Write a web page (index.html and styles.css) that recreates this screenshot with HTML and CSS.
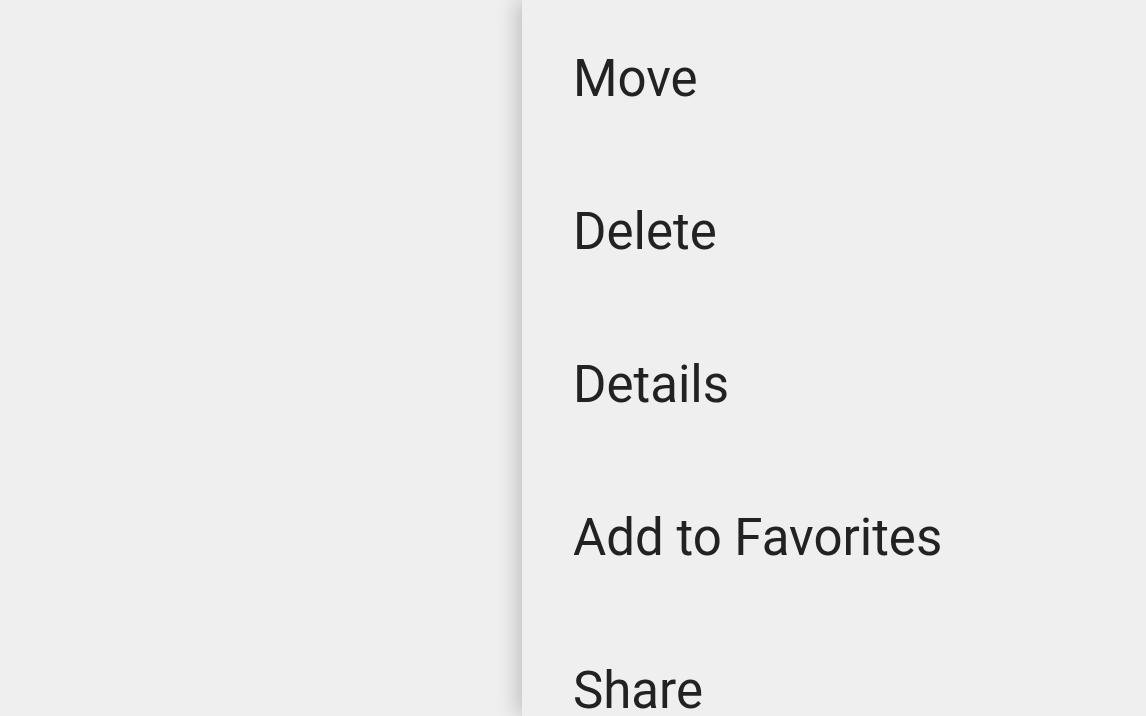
FILE: index.html
```html
<!doctype html>
<html>
 <head>
	<meta charset="UTF-8">
	<meta name="viewport" content="width=device-width, initial-scale=1.0">
	<title>Menu</title>
	<link rel="stylesheet" href="styles.css">
 </head>
<body>
	<div class="screen">
		<div class="backdrop"></div>
		<ul class="menu">
			<li>Move</li>
			<li>Delete</li>
			<li>Details</li>
			<li>Add to Favorites</li>
			<li>Share</li>
		</ul>
	</div>
</body>
</html>
```

FILE: styles.css
```css
* {
	box-sizing: border-box;
}

body {
	margin: 0;
	padding: 0;
	background-color: #efefef;
	font-family: "Roboto", "Liberation Sans", sans-serif;
	overflow: hidden;
}

.screen {
	display: flex;
	height: 716px;
	overflow: hidden;
}

.backdrop {
	width: 522px;
	flex-shrink: 0;
}

.menu {
	flex: 1;
	list-style: none;
	margin: 0;
	padding: 2px 0 0 51px;
	background-color: #efefef;
	box-shadow: -5px 0 20px rgba(0, 0, 0, 0.2);
	position: relative;
}

.menu li {
	height: 153px;
	line-height: 153px;
	font-size: 51px;
	color: #222222;
	white-space: nowrap;
}
```
